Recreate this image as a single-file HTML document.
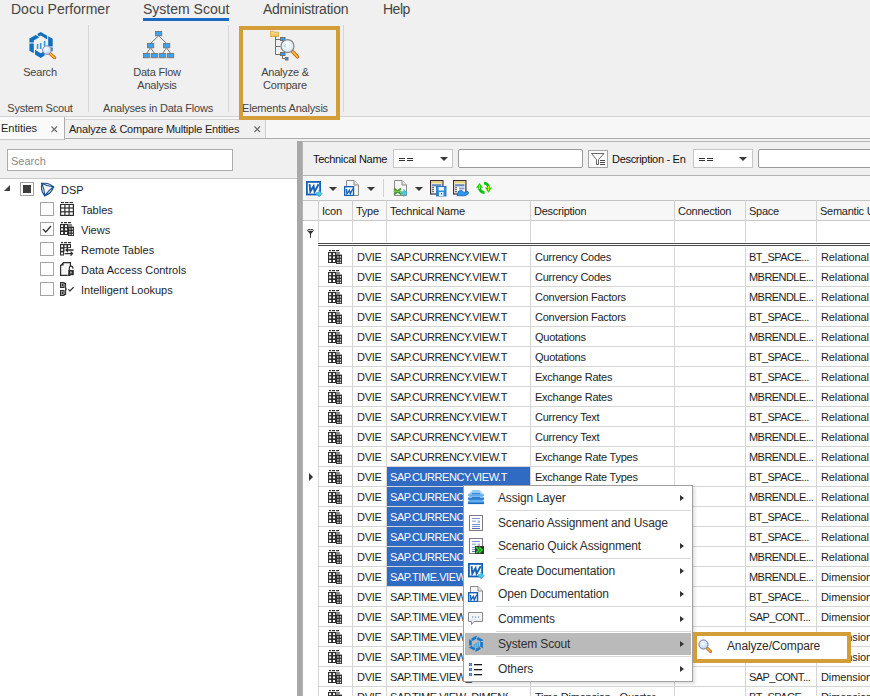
<!DOCTYPE html><html><head><meta charset="utf-8"><style>
*{margin:0;padding:0;box-sizing:border-box}
body{width:870px;height:696px;overflow:hidden;background:#f0f0f0;font-family:"Liberation Sans",sans-serif;color:#1e1e1e;position:relative}
.a{position:absolute;white-space:nowrap}
.menu{font-size:14px;color:#444;line-height:18px;margin-top:-1px}
.rb{font-size:11px;color:#444;letter-spacing:-0.2px;line-height:13px;text-align:center}
.sep{position:absolute;width:1px;background:#d6d6d6}
.cell{position:absolute;font-size:11px;line-height:19px;height:19px;white-space:nowrap;overflow:hidden;color:#1e1e1e;letter-spacing:-0.25px}
.cm{position:absolute;font-size:12px;line-height:16px;color:#2e2e2e;white-space:nowrap;letter-spacing:-0.15px}
.cms{position:absolute;height:1px;background:#d9d9d9;left:496px;width:195px}
.arr{position:absolute;width:0;height:0;border-top:3.5px solid transparent;border-bottom:3.5px solid transparent;border-left:4px solid #333;left:680px}
.cb{position:absolute;width:14px;height:14px;border:1px solid #a4a4a4;background:#fff}
.tt{position:absolute;font-size:11px;line-height:14px;color:#1e1e1e;white-space:nowrap}
.dd{position:absolute;width:0;height:0;border-left:4px solid transparent;border-right:4px solid transparent;border-top:4px solid #3a3a3a}
</style></head><body>

<div class="a menu" style="left:11px;top:1px">Docu Performer</div>
<div class="a menu" style="left:143px;top:1px">System Scout</div>
<div class="a" style="left:143px;top:18px;width:86px;height:3px;background:#1a69c2"></div>
<div class="a menu" style="left:263px;top:1px;letter-spacing:-0.25px">Administration</div>
<div class="a menu" style="left:383px;top:1px;letter-spacing:-0.5px">Help</div>
<div class="sep" style="left:88px;top:25px;height:87px"></div>
<div class="sep" style="left:228px;top:25px;height:87px"></div>
<div class="sep" style="left:343px;top:25px;height:87px"></div>
<div class="a rb" style="left:0px;width:80px;top:66px">Search</div>
<div class="a rb" style="left:0px;width:80px;top:102px">System Scout</div>
<div class="a rb" style="left:107px;width:100px;top:66px">Data Flow<br>Analysis</div>
<div class="a rb" style="left:90px;width:136px;top:102px">Analyses in Data Flows</div>
<div class="a rb" style="left:235px;width:100px;top:66px">Analyze &amp;<br>Compare</div>
<div class="a rb" style="left:235px;width:100px;top:102px">Elements Analysis</div>
<svg class="a" style="left:26px;top:28px" width="32" height="32" viewBox="0 0 32 32" ><g transform="scale(1.0)">
<g fill="#1070c0">
<path d="M3.4 10.6 L9.7 6.9 L13.3 9.3 L7.8 12.6 V14.6 H3.4z"/>
<path d="M11.2 6.1 L14.7 3.9 L21.2 7.7 V11.4 L14.7 7.6 L13.0 8.5z"/>
<path d="M22.2 8.3 L26.7 10.8 V18.6 H22.2z"/>
<path d="M25 19.6 H26.7 V23.2 H25z"/>
<path d="M3.4 15.6 H7.8 V25.2 L3.4 22.8z"/>
<path d="M9 21.8 L14.7 25.3 L18.6 23 V27.5 L14.7 29.9 L9 26.6z"/>
</g><g fill="#2f9ae0"><rect x="10.8" y="16" width="1.6" height="5"/><rect x="13.9" y="15" width="1.6" height="6"/><rect x="17.8" y="13" width="1.6" height="5.5"/></g><defs><radialGradient id="mg26" cx="0.4" cy="0.35" r="0.7"><stop offset="0" stop-color="#ffffff"/><stop offset="1" stop-color="#a9d3f2"/></radialGradient></defs>
<path d="M23.6 25.2 L28.6 29.6" stroke="#c05a10" stroke-width="3.2" stroke-linecap="round"/>
<path d="M23.6 25.2 L28.6 29.6" stroke="#ffb52e" stroke-width="1.8" stroke-linecap="round"/>
<circle cx="20.9" cy="22.1" r="4.3" fill="url(#mg26)" stroke="#8a88b8" stroke-width="1"/></g></svg>
<svg class="a" style="left:143px;top:31px" width="32" height="28" viewBox="0 0 32 28" ><g stroke="#777" stroke-width="1" fill="none"><path d="M15.6 4.7 L7.6 12.5 M15.6 4.7 L23.6 12.5 M7.6 16.7 L3.6 22.5 M7.6 16.7 L11.6 22.5 M23.6 16.7 L19.6 22.5 M23.6 16.7 L27.6 22.5"/></g><rect x="12.5" y="0.5" width="6.2" height="4.2" fill="#3ba3f0" stroke="#7a7a7a" stroke-width="1"/><rect x="4.5" y="12.5" width="6.2" height="4.2" fill="#3ba3f0" stroke="#7a7a7a" stroke-width="1"/><rect x="20.5" y="12.5" width="6.2" height="4.2" fill="#3ba3f0" stroke="#7a7a7a" stroke-width="1"/><rect x="0.5" y="22.5" width="6.2" height="4.2" fill="#3ba3f0" stroke="#7a7a7a" stroke-width="1"/><rect x="8.5" y="22.5" width="6.2" height="4.2" fill="#3ba3f0" stroke="#7a7a7a" stroke-width="1"/><rect x="16.5" y="22.5" width="6.2" height="4.2" fill="#3ba3f0" stroke="#7a7a7a" stroke-width="1"/><rect x="24.5" y="22.5" width="6.2" height="4.2" fill="#3ba3f0" stroke="#7a7a7a" stroke-width="1"/></svg>
<svg class="a" style="left:266px;top:28px" width="36" height="34" viewBox="0 0 36 34" ><defs><radialGradient id="ag" cx="0.45" cy="0.4" r="0.7"><stop offset="0" stop-color="#ffffff"/><stop offset="0.7" stop-color="#dcecf8"/><stop offset="1" stop-color="#a8cdee"/></radialGradient>
<linearGradient id="fo" x1="0" y1="0" x2="0" y2="1"><stop offset="0" stop-color="#fbe39a"/><stop offset="1" stop-color="#f0c050"/></linearGradient></defs>
<path d="M4.5 3.2 h3 l1 1 h4 v4.3 h-8z" fill="url(#fo)" stroke="#d8a040" stroke-width="0.8"/>
<g stroke="#707070" stroke-width="1" fill="none"><path d="M9.5 8.5 V26.5 H14.5 M9.5 11.5 H14.5 M9.5 18.5 H14.5 M16.5 27.5 V30.5 H19.5"/></g>
<rect x="14.5" y="9.5" width="4.5" height="3" fill="#2e9cf0" stroke="#707070" stroke-width="1"/>
<rect x="14.5" y="24.5" width="4.5" height="3" fill="#2e9cf0" stroke="#707070" stroke-width="1"/>
<rect x="19.5" y="29.5" width="2.5" height="2.5" fill="#2e9cf0" stroke="#707070" stroke-width="1"/>
<path d="M26.5 23.5 L31.5 28.8" stroke="#b84a08" stroke-width="3.4" stroke-linecap="round"/>
<path d="M26.5 23.5 L31.5 28.8" stroke="#ffc030" stroke-width="1.9" stroke-linecap="round"/>
<circle cx="21.5" cy="18.1" r="6.5" fill="url(#ag)" stroke="#858585" stroke-width="1.2"/>
<path d="M17 18 L20 15.5 V19.5z" fill="#9cc8ec" opacity="0.7"/></svg>
<div class="a" style="left:0;top:116px;width:870px;height:23px;background:#f7f7f7;border-top:1px solid #d2d2d2;border-bottom:1px solid #acacac"></div>
<div class="a" style="left:0;top:117px;width:65px;height:23px;background:#fafafa;border-right:1px solid #acacac;border-bottom:1px solid #c8c8c8"></div>
<div class="a" style="left:65px;top:119px;width:201px;height:19px;background:#f0f0f0;border-right:1px solid #cfcfcf;border-top:1px solid #d6d6d6"></div>
<div class="a" style="left:1px;top:121px;font-size:11px;line-height:14px;color:#1e1e1e">Entities</div>
<svg class="a" style="left:51px;top:126px" width="7" height="7" viewBox="0 0 7 7" ><path d="M0.5 0.5 L6 6 M6 0.5 L0.5 6" stroke="#6a6a6a" stroke-width="1.1"/></svg>
<div class="a" style="left:69px;top:122px;font-size:11px;line-height:14px;color:#1e1e1e;letter-spacing:-0.22px">Analyze &amp; Compare Multiple Entities</div>
<svg class="a" style="left:254px;top:126px" width="7" height="7" viewBox="0 0 7 7" ><path d="M0.5 0.5 L6 6 M6 0.5 L0.5 6" stroke="#6a6a6a" stroke-width="1.1"/></svg>
<div class="a" style="left:239px;top:26px;width:101px;height:94px;border:4px solid #d39e38"></div>
<div class="a" style="left:0;top:140px;width:297px;height:39px;background:#f0f0f0;border-bottom:1px solid #c9c9c9"></div>
<div class="a" style="left:7px;top:149px;width:226px;height:22px;background:#fff;border:1px solid #acacac"></div>
<div class="a" style="left:11px;top:154px;font-size:11px;line-height:14px;color:#8a8a8a">Search</div>
<div class="a" style="left:0;top:179px;width:297px;height:517px;background:#fff"></div>
<div class="a" style="left:4px;top:185px;width:0;height:0;border-left:6px solid transparent;border-bottom:6px solid #404040"></div>
<div class="cb" style="left:20px;top:182px"></div><div class="a" style="left:23px;top:185px;width:8px;height:8px;background:#3c3c3c"></div>
<svg class="a" style="left:40px;top:182px" width="15" height="15" viewBox="0 0 15 15" ><path d="M2.0 1.6 L13.4 5.0 L4.8 13.6z" fill="#f0f3f8"/>
<g fill="none" stroke="#1a4f8a" stroke-width="1.15" stroke-linejoin="round"><path d="M2.00 1.60 Q8.62 0.03 13.40 5.00 Q7.43 4.26 2.00 1.60z"/><path d="M13.40 5.00 Q11.40 11.80 4.80 13.60 Q8.42 8.56 13.40 5.00z"/><path d="M4.80 13.60 Q0.11 8.46 2.00 1.60 Q4.37 7.35 4.80 13.60z"/></g>
<g fill="#1a4f8a"><circle cx="2.0" cy="1.6" r="1.0"/><circle cx="13.4" cy="5.0" r="1.0"/><circle cx="4.8" cy="13.6" r="1.0"/></g></svg>
<div class="tt" style="left:61px;top:183px">DSP</div>
<div class="cb" style="left:40px;top:202px"></div>
<svg class="a" style="left:60px;top:202px" width="14" height="14" viewBox="0 0 14 14" ><g fill="#2e2e2e"><rect x="1" y="0" width="3" height="1.1"/><rect x="5" y="0" width="3.5" height="1.1"/><rect x="9.5" y="0" width="3.5" height="1.1"/>
<rect x="0" y="2" width="14" height="12"/></g><g fill="#fff">
<rect x="1.2" y="3" width="3.1" height="2.4"/><rect x="5.5" y="3" width="3" height="2.4"/><rect x="9.7" y="3" width="3.1" height="2.4"/>
<rect x="1.2" y="6.6" width="3.1" height="2.6"/><rect x="5.5" y="6.6" width="3" height="2.6"/><rect x="9.7" y="6.6" width="3.1" height="2.6"/>
<rect x="1.2" y="10.4" width="3.1" height="2.4"/><rect x="5.5" y="10.4" width="3" height="2.4"/><rect x="9.7" y="10.4" width="3.1" height="2.4"/></g></svg>
<div class="tt" style="left:81px;top:203px">Tables</div>
<div class="cb" style="left:40px;top:222px"></div>
<svg class="a" style="left:42px;top:225px" width="10" height="8" viewBox="0 0 10 8" ><path d="M1 4 L3.8 7 L9 1" fill="none" stroke="#333" stroke-width="1.3"/></svg>
<svg class="a" style="left:60px;top:222px" width="15" height="14" viewBox="0 0 15 14" ><g fill="#2e2e2e"><rect x="1" y="0" width="2" height="1.2"/><rect x="4" y="0" width="3" height="1.2"/><rect x="8" y="0" width="3" height="1.2"/>
<rect x="0" y="2" width="8.2" height="11"/><rect x="8" y="2" width="4" height="2.6" fill="#8a8a8a"/><rect x="8" y="4.6" width="6" height="9.4"/></g>
<g fill="#fff"><rect x="1.1" y="3.1" width="2" height="2"/><rect x="5" y="3.1" width="2" height="2"/><rect x="1.1" y="6.4" width="2" height="2"/><rect x="5" y="6.4" width="2" height="2"/><rect x="1.1" y="10" width="2" height="2"/><rect x="5" y="10" width="2" height="2"/>
<rect x="9.3" y="6.3" width="1.3" height="1.3"/><rect x="11.8" y="6.3" width="1.3" height="1.3"/><rect x="9.3" y="9.2" width="1.3" height="1.3"/><rect x="11.8" y="9.2" width="1.3" height="1.3"/><rect x="9.3" y="11.8" width="1.3" height="1.3"/><rect x="11.8" y="11.8" width="1.3" height="1.3"/></g></svg>
<div class="tt" style="left:81px;top:223px">Views</div>
<div class="cb" style="left:40px;top:242px"></div>
<svg class="a" style="left:60px;top:242px" width="14" height="14" viewBox="0 0 14 14" ><g fill="#2e2e2e"><rect x="1" y="0" width="2" height="1.2"/><rect x="4" y="0" width="3" height="1.2"/><rect x="8" y="0" width="3" height="1.2"/>
<rect x="0" y="2" width="11" height="11.5"/></g><g fill="#fff">
<rect x="1.1" y="3.2" width="2" height="2"/><rect x="4.5" y="3.2" width="2" height="2"/><rect x="8" y="3.2" width="2" height="2"/>
<rect x="1.1" y="6.8" width="2" height="2"/><rect x="1.1" y="10.4" width="2" height="2"/></g>
<path d="M4 6 H14 V14 H4z" fill="#fff"/>
<g stroke="#2e2e2e" stroke-width="1.3" fill="none"><path d="M13.5 8 H6 M8 6 L6 8 L8 10"/><path d="M4.5 11.6 H12.5 M10.5 9.6 L12.5 11.6 L10.5 13.6"/></g>
<rect x="3.5" y="6" width="1" height="4" fill="#2e2e2e"/></svg>
<div class="tt" style="left:81px;top:243px">Remote Tables</div>
<div class="cb" style="left:40px;top:262px"></div>
<svg class="a" style="left:60px;top:262px" width="14" height="14" viewBox="0 0 14 14" ><path d="M3.6 0.6 H10.4 V13.4 H0.6 V3.6z" fill="#f4f4f4" stroke="#2e2e2e" stroke-width="1.2"/>
<path d="M0.6 3.6 L3.6 0.6 V3.6z" fill="#2e2e2e"/>
<rect x="7.6" y="4" width="6.4" height="10" fill="#fff"/>
<path d="M9.3 8 V6 A1.8 1.8 0 0 1 12.9 6 V6.8" fill="none" stroke="#2e2e2e" stroke-width="1.2"/>
<rect x="8.2" y="8" width="5.6" height="5.2" fill="#2e2e2e"/><rect x="10.5" y="9.5" width="1" height="2" fill="#fff"/>
<path d="M7.6 13.4 H10.4" stroke="#2e2e2e" stroke-width="1.2"/></svg>
<div class="tt" style="left:81px;top:263px">Data Access Controls</div>
<div class="cb" style="left:40px;top:282px"></div>
<svg class="a" style="left:60px;top:282px" width="14" height="14" viewBox="0 0 14 14" ><rect x="0.6" y="0.6" width="3.4" height="4.8" fill="#fff" stroke="#2e2e2e" stroke-width="1.2"/><rect x="1.6" y="1.6" width="1.4" height="2.8" fill="#2e2e2e"/>
<rect x="0.6" y="8.6" width="3.4" height="4.8" fill="#fff" stroke="#2e2e2e" stroke-width="1.2"/><rect x="1.6" y="9.6" width="1.4" height="2.8" fill="#2e2e2e"/>
<path d="M4 1.5 H5.6 V12.5 H4 M5.6 7 H7" fill="none" stroke="#2e2e2e" stroke-width="1.1"/>
<path d="M8.3 7.3 L10 9 L13.6 5.2" fill="none" stroke="#2e2e2e" stroke-width="1.2"/></svg>
<div class="tt" style="left:81px;top:283px">Intelligent Lookups</div>
<div class="a" style="left:297px;top:141px;width:5px;height:555px;background:#a8a8a8"></div>
<div class="a" style="left:302px;top:141px;width:1px;height:555px;background:#b4b4b4"></div>
<div class="a" style="left:303px;top:141px;width:567px;height:35px;background:#f0f0f0;border-top:1px solid #b4b4b4;border-bottom:1px solid #b4b4b4"></div>
<div class="a" style="left:313px;top:152px;font-size:11px;line-height:14px;letter-spacing:-0.3px;color:#111">Technical Name</div>
<div class="a" style="left:393px;top:149px;width:60px;height:19px;background:#fff;border:1px solid #c6c6c6"></div>
<div class="a" style="left:399px;top:158px;width:6px;height:1px;background:#333"></div><div class="a" style="left:399px;top:160px;width:6px;height:1px;background:#333"></div><div class="a" style="left:407px;top:158px;width:6px;height:1px;background:#333"></div><div class="a" style="left:407px;top:160px;width:6px;height:1px;background:#333"></div>
<div class="dd" style="left:440px;top:157px"></div>
<div class="a" style="left:458px;top:149px;width:125px;height:19px;background:#fff;border:1px solid #9a9a9a;border-radius:2px"></div>
<svg class="a" style="left:588px;top:150px" width="20" height="18" viewBox="0 0 20 18" ><rect x="0.5" y="0.5" width="19" height="17" fill="#fbfbfb" stroke="#a6a6a6" stroke-width="1"/>
<path d="M3.5 3.5 H16 L10.5 9.5 V14.5 H8.5 V9.5z" fill="#fff" stroke="#555" stroke-width="0.9" stroke-linejoin="round"/>
<g fill="#333"><rect x="12" y="10" width="5" height="0.9"/><rect x="12" y="12" width="5" height="0.9"/><rect x="12" y="14" width="5" height="0.9"/></g></svg>
<div class="a" style="left:612px;top:152px;font-size:11px;line-height:14px;letter-spacing:-0.3px;color:#111">Description - En</div>
<div class="a" style="left:693px;top:149px;width:60px;height:19px;background:#fff;border:1px solid #c6c6c6"></div>
<div class="a" style="left:699px;top:158px;width:6px;height:1px;background:#333"></div><div class="a" style="left:699px;top:160px;width:6px;height:1px;background:#333"></div><div class="a" style="left:707px;top:158px;width:6px;height:1px;background:#333"></div><div class="a" style="left:707px;top:160px;width:6px;height:1px;background:#333"></div>
<div class="dd" style="left:739px;top:157px"></div>
<div class="a" style="left:758px;top:149px;width:130px;height:19px;background:#fff;border:1px solid #9a9a9a;border-radius:2px"></div>
<div class="a" style="left:303px;top:176px;width:567px;height:24px;background:#f7f7f7"></div>
<svg class="a" style="left:306px;top:181px" width="17" height="17" viewBox="0 0 17 17" ><rect x="0.9" y="0.9" width="13.2" height="12.6" fill="#fff" stroke="#1560b8" stroke-width="1.8"/>
<path d="M3.6 3.2 L4.3 10.6 L7.6 5.2 L8.6 10.6 L12.6 3.2" fill="none" stroke="#1560b8" stroke-width="1.9" stroke-linejoin="miter"/>
<path d="M10.5 11.5 h2.3 v-2.2 l3.3 3.4 l-3.3 3.4 v-2.2 h-2.3z" fill="#48cce8" stroke="#2a9cc0" stroke-width="0.6"/></svg>
<div class="dd" style="left:329px;top:187px"></div>
<svg class="a" style="left:344px;top:180px" width="16" height="16" viewBox="0 0 16 16" ><path d="M2.5 0.5 H10 L14.5 5 V15.5 H2.5z" fill="#f6f6f6" stroke="#8a8a8a" stroke-width="1"/>
<path d="M10 0.5 V5 H14.5" fill="#e4e4e4" stroke="#8a8a8a" stroke-width="1"/>
<rect x="0.7" y="6.7" width="8.8" height="8.8" fill="#fff" stroke="#1560b8" stroke-width="1.4"/>
<path d="M2.4 8.8 L3 13.8 L5.4 10.4 L6.3 13.8 L8.8 8.8" fill="none" stroke="#1560b8" stroke-width="1.4"/></svg>
<div class="dd" style="left:367px;top:187px"></div>
<div class="a" style="left:383px;top:179px;width:1px;height:18px;background:#d0d0d0"></div>
<svg class="a" style="left:393px;top:180px" width="16" height="17" viewBox="0 0 16 17" ><path d="M1.5 0.5 H9 L13.5 5 V15.5 H1.5z" fill="#f6f6f6" stroke="#8a8a8a" stroke-width="1"/>
<path d="M9 0.5 V5 H13.5" fill="#e4e4e4" stroke="#8a8a8a" stroke-width="1"/>
<path d="M1 8.5 L8.5 14.5 M8 8.5 L1 14.5" stroke="#3c9a2a" stroke-width="1.8"/>
<rect x="0.5" y="10.8" width="8" height="1.2" fill="#7ac850"/>
<path d="M8.5 11.8 h2.3 v-2.2 l3.3 3.4 l-3.3 3.4 v-2.2 h-2.3z" fill="#48cce8" stroke="#2a9cc0" stroke-width="0.6"/></svg>
<div class="dd" style="left:415px;top:187px"></div>
<svg class="a" style="left:430px;top:180px" width="17" height="17" viewBox="0 0 17 17" ><rect x="0.6" y="0.6" width="12.3" height="13.4" fill="#fff" stroke="#3a2a3a" stroke-width="1.2"/>
<rect x="1.2" y="1.2" width="11.1" height="2.3" fill="#e6d27a"/>
<rect x="2" y="4.2" width="9.5" height="2.2" fill="#6a88b8"/>
<g fill="#333"><rect x="2" y="7.3" width="2" height="0.9"/><rect x="2" y="9.3" width="2" height="0.9"/><rect x="2" y="11.3" width="2" height="0.9"/></g>
<rect x="6.5" y="6.5" width="9.5" height="9.5" fill="#2f8fdc" stroke="#1f6fb8" stroke-width="0.8"/>
<rect x="8.5" y="7" width="5.5" height="3.5" fill="#e8f4ff"/><rect x="9" y="12" width="4.5" height="4" fill="#dff0ff"/><rect x="11" y="13" width="1" height="1.5" fill="#555"/></svg>
<svg class="a" style="left:453px;top:180px" width="17" height="17" viewBox="0 0 17 17" ><rect x="0.6" y="0.6" width="12.3" height="13.4" fill="#fff" stroke="#3a2a3a" stroke-width="1.2"/>
<rect x="1.2" y="1.2" width="11.1" height="2.3" fill="#e6d27a"/>
<rect x="2" y="4.2" width="9.5" height="2.2" fill="#6a88b8"/>
<g fill="#333"><rect x="2" y="7.3" width="2" height="0.9"/><rect x="2" y="9.3" width="2" height="0.9"/><rect x="2" y="11.3" width="2" height="0.9"/></g>
<rect x="6" y="7.5" width="5.5" height="2" fill="#8a9ad0"/>
<path d="M4 15.6 L5.5 11 L9 10.5 L11 12.5 L14 11 L15.8 12.5 C15 15 12 16 9 15.8z" fill="#2a9ae8" stroke="#1a5ab0" stroke-width="0.8"/></svg>
<svg class="a" style="left:472px;top:178px" width="21" height="17" viewBox="0 0 21 17" ><defs><linearGradient id="rg" x1="0" y1="0" x2="1" y2="1"><stop offset="0" stop-color="#b8f000"/><stop offset="1" stop-color="#00c000"/></linearGradient></defs>
<g fill="none" stroke="#00c400" stroke-width="2.8"><path d="M7.5 9.3 A5 5 0 0 0 12.5 14.6"/><path d="M12 5.2 A4.6 4.6 0 0 1 16.6 9.8"/></g>
<path d="M4 9.7 L7.5 5 L11 9.7z" fill="#20d000"/><path d="M13 9.6 L20 9.6 L16.5 14.7z" fill="#20d000"/>
<path d="M7.5 7 V11" stroke="#c8f000" stroke-width="1"/><path d="M16.5 8 V12.5" stroke="#c8f000" stroke-width="1"/></svg>
<div class="a" style="left:303px;top:200px;width:567px;height:496px;background:#fff"></div>
<div class="a" style="left:303px;top:200px;width:567px;height:21px;background:#f7f7f7;border-top:1px solid #c4c4c4;border-bottom:1px solid #c8c8c8"></div>
<div class="a" style="left:318px;top:200px;width:1px;height:21px;background:#d0d0d0"></div>
<div class="cell" style="left:322px;top:202px;line-height:19px">Icon</div>
<div class="a" style="left:352px;top:200px;width:1px;height:21px;background:#d0d0d0"></div>
<div class="cell" style="left:356px;top:202px;line-height:19px">Type</div>
<div class="a" style="left:386px;top:200px;width:1px;height:21px;background:#d0d0d0"></div>
<div class="cell" style="left:390px;top:202px;line-height:19px">Technical Name</div>
<div class="a" style="left:530px;top:200px;width:1px;height:21px;background:#d0d0d0"></div>
<div class="cell" style="left:534px;top:202px;line-height:19px">Description</div>
<div class="a" style="left:674px;top:200px;width:1px;height:21px;background:#d0d0d0"></div>
<div class="cell" style="left:678px;top:202px;line-height:19px">Connection</div>
<div class="a" style="left:745px;top:200px;width:1px;height:21px;background:#d0d0d0"></div>
<div class="cell" style="left:749px;top:202px;line-height:19px">Space</div>
<div class="a" style="left:816px;top:200px;width:1px;height:21px;background:#d0d0d0"></div>
<div class="cell" style="left:820px;top:202px;line-height:19px">Semantic U</div>
<svg class="a" style="left:307px;top:229px" width="7" height="9" viewBox="0 0 7 9" ><ellipse cx="3.5" cy="1.5" rx="3.2" ry="1.2" fill="#fff" stroke="#333" stroke-width="1"/>
<path d="M0.5 1.8 L3 5 V8.7 H4 V5 L6.5 1.8z" fill="#333"/></svg>
<div class="a" style="left:318px;top:221px;width:1px;height:21px;background:#d5d5d5"></div>
<div class="a" style="left:352px;top:221px;width:1px;height:21px;background:#d5d5d5"></div>
<div class="a" style="left:386px;top:221px;width:1px;height:21px;background:#d5d5d5"></div>
<div class="a" style="left:530px;top:221px;width:1px;height:21px;background:#d5d5d5"></div>
<div class="a" style="left:674px;top:221px;width:1px;height:21px;background:#d5d5d5"></div>
<div class="a" style="left:745px;top:221px;width:1px;height:21px;background:#d5d5d5"></div>
<div class="a" style="left:816px;top:221px;width:1px;height:21px;background:#d5d5d5"></div>
<div class="a" style="left:318px;top:243px;width:552px;height:1px;background:#4a4a4a"></div>
<div class="a" style="left:318px;top:245px;width:552px;height:1px;background:#4a4a4a"></div>
<div class="a" style="left:318px;top:266px;width:552px;height:1px;background:#d5d5d5"></div>
<div class="a" style="left:318px;top:247px;width:1px;height:20px;background:#d5d5d5"></div>
<div class="a" style="left:352px;top:247px;width:1px;height:20px;background:#d5d5d5"></div>
<div class="a" style="left:386px;top:247px;width:1px;height:20px;background:#d5d5d5"></div>
<div class="a" style="left:530px;top:247px;width:1px;height:20px;background:#d5d5d5"></div>
<div class="a" style="left:674px;top:247px;width:1px;height:20px;background:#d5d5d5"></div>
<div class="a" style="left:745px;top:247px;width:1px;height:20px;background:#d5d5d5"></div>
<div class="a" style="left:816px;top:247px;width:1px;height:20px;background:#d5d5d5"></div>
<svg class="a" style="left:328px;top:250px" width="15" height="14" viewBox="0 0 15 14" ><g fill="#2e2e2e"><rect x="1" y="0" width="2" height="1.2"/><rect x="4" y="0" width="3" height="1.2"/><rect x="8" y="0" width="3" height="1.2"/>
<rect x="0" y="2" width="8.2" height="11"/><rect x="8" y="2" width="4" height="2.6" fill="#8a8a8a"/><rect x="8" y="4.6" width="6" height="9.4"/></g>
<g fill="#fff"><rect x="1.1" y="3.1" width="2" height="2"/><rect x="5" y="3.1" width="2" height="2"/><rect x="1.1" y="6.4" width="2" height="2"/><rect x="5" y="6.4" width="2" height="2"/><rect x="1.1" y="10" width="2" height="2"/><rect x="5" y="10" width="2" height="2"/>
<rect x="9.3" y="6.3" width="1.3" height="1.3"/><rect x="11.8" y="6.3" width="1.3" height="1.3"/><rect x="9.3" y="9.2" width="1.3" height="1.3"/><rect x="11.8" y="9.2" width="1.3" height="1.3"/><rect x="9.3" y="11.8" width="1.3" height="1.3"/><rect x="11.8" y="11.8" width="1.3" height="1.3"/></g></svg>
<div class="cell" style="left:357px;top:247.5px;width:28px">DVIE</div>
<div class="cell" style="left:390px;top:247.5px;width:118px;letter-spacing:-0.42px">SAP.CURRENCY.VIEW.T</div>
<div class="cell" style="left:535px;top:247.5px;width:138px">Currency Codes</div>
<div class="cell" style="left:749px;top:247.5px;width:66px;letter-spacing:-0.55px">BT_SPACE...</div>
<div class="cell" style="left:821px;top:247.5px;width:60px;letter-spacing:-0.1px">Relational</div>
<div class="a" style="left:318px;top:286px;width:552px;height:1px;background:#d5d5d5"></div>
<div class="a" style="left:318px;top:267px;width:1px;height:20px;background:#d5d5d5"></div>
<div class="a" style="left:352px;top:267px;width:1px;height:20px;background:#d5d5d5"></div>
<div class="a" style="left:386px;top:267px;width:1px;height:20px;background:#d5d5d5"></div>
<div class="a" style="left:530px;top:267px;width:1px;height:20px;background:#d5d5d5"></div>
<div class="a" style="left:674px;top:267px;width:1px;height:20px;background:#d5d5d5"></div>
<div class="a" style="left:745px;top:267px;width:1px;height:20px;background:#d5d5d5"></div>
<div class="a" style="left:816px;top:267px;width:1px;height:20px;background:#d5d5d5"></div>
<svg class="a" style="left:328px;top:270px" width="15" height="14" viewBox="0 0 15 14" ><g fill="#2e2e2e"><rect x="1" y="0" width="2" height="1.2"/><rect x="4" y="0" width="3" height="1.2"/><rect x="8" y="0" width="3" height="1.2"/>
<rect x="0" y="2" width="8.2" height="11"/><rect x="8" y="2" width="4" height="2.6" fill="#8a8a8a"/><rect x="8" y="4.6" width="6" height="9.4"/></g>
<g fill="#fff"><rect x="1.1" y="3.1" width="2" height="2"/><rect x="5" y="3.1" width="2" height="2"/><rect x="1.1" y="6.4" width="2" height="2"/><rect x="5" y="6.4" width="2" height="2"/><rect x="1.1" y="10" width="2" height="2"/><rect x="5" y="10" width="2" height="2"/>
<rect x="9.3" y="6.3" width="1.3" height="1.3"/><rect x="11.8" y="6.3" width="1.3" height="1.3"/><rect x="9.3" y="9.2" width="1.3" height="1.3"/><rect x="11.8" y="9.2" width="1.3" height="1.3"/><rect x="9.3" y="11.8" width="1.3" height="1.3"/><rect x="11.8" y="11.8" width="1.3" height="1.3"/></g></svg>
<div class="cell" style="left:357px;top:267.5px;width:28px">DVIE</div>
<div class="cell" style="left:390px;top:267.5px;width:118px;letter-spacing:-0.42px">SAP.CURRENCY.VIEW.T</div>
<div class="cell" style="left:535px;top:267.5px;width:138px">Currency Codes</div>
<div class="cell" style="left:749px;top:267.5px;width:66px;letter-spacing:-0.55px">MBRENDLE...</div>
<div class="cell" style="left:821px;top:267.5px;width:60px;letter-spacing:-0.1px">Relational</div>
<div class="a" style="left:318px;top:306px;width:552px;height:1px;background:#d5d5d5"></div>
<div class="a" style="left:318px;top:287px;width:1px;height:20px;background:#d5d5d5"></div>
<div class="a" style="left:352px;top:287px;width:1px;height:20px;background:#d5d5d5"></div>
<div class="a" style="left:386px;top:287px;width:1px;height:20px;background:#d5d5d5"></div>
<div class="a" style="left:530px;top:287px;width:1px;height:20px;background:#d5d5d5"></div>
<div class="a" style="left:674px;top:287px;width:1px;height:20px;background:#d5d5d5"></div>
<div class="a" style="left:745px;top:287px;width:1px;height:20px;background:#d5d5d5"></div>
<div class="a" style="left:816px;top:287px;width:1px;height:20px;background:#d5d5d5"></div>
<svg class="a" style="left:328px;top:290px" width="15" height="14" viewBox="0 0 15 14" ><g fill="#2e2e2e"><rect x="1" y="0" width="2" height="1.2"/><rect x="4" y="0" width="3" height="1.2"/><rect x="8" y="0" width="3" height="1.2"/>
<rect x="0" y="2" width="8.2" height="11"/><rect x="8" y="2" width="4" height="2.6" fill="#8a8a8a"/><rect x="8" y="4.6" width="6" height="9.4"/></g>
<g fill="#fff"><rect x="1.1" y="3.1" width="2" height="2"/><rect x="5" y="3.1" width="2" height="2"/><rect x="1.1" y="6.4" width="2" height="2"/><rect x="5" y="6.4" width="2" height="2"/><rect x="1.1" y="10" width="2" height="2"/><rect x="5" y="10" width="2" height="2"/>
<rect x="9.3" y="6.3" width="1.3" height="1.3"/><rect x="11.8" y="6.3" width="1.3" height="1.3"/><rect x="9.3" y="9.2" width="1.3" height="1.3"/><rect x="11.8" y="9.2" width="1.3" height="1.3"/><rect x="9.3" y="11.8" width="1.3" height="1.3"/><rect x="11.8" y="11.8" width="1.3" height="1.3"/></g></svg>
<div class="cell" style="left:357px;top:287.5px;width:28px">DVIE</div>
<div class="cell" style="left:390px;top:287.5px;width:118px;letter-spacing:-0.42px">SAP.CURRENCY.VIEW.T</div>
<div class="cell" style="left:535px;top:287.5px;width:138px">Conversion Factors</div>
<div class="cell" style="left:749px;top:287.5px;width:66px;letter-spacing:-0.55px">MBRENDLE...</div>
<div class="cell" style="left:821px;top:287.5px;width:60px;letter-spacing:-0.1px">Relational</div>
<div class="a" style="left:318px;top:326px;width:552px;height:1px;background:#d5d5d5"></div>
<div class="a" style="left:318px;top:307px;width:1px;height:20px;background:#d5d5d5"></div>
<div class="a" style="left:352px;top:307px;width:1px;height:20px;background:#d5d5d5"></div>
<div class="a" style="left:386px;top:307px;width:1px;height:20px;background:#d5d5d5"></div>
<div class="a" style="left:530px;top:307px;width:1px;height:20px;background:#d5d5d5"></div>
<div class="a" style="left:674px;top:307px;width:1px;height:20px;background:#d5d5d5"></div>
<div class="a" style="left:745px;top:307px;width:1px;height:20px;background:#d5d5d5"></div>
<div class="a" style="left:816px;top:307px;width:1px;height:20px;background:#d5d5d5"></div>
<svg class="a" style="left:328px;top:310px" width="15" height="14" viewBox="0 0 15 14" ><g fill="#2e2e2e"><rect x="1" y="0" width="2" height="1.2"/><rect x="4" y="0" width="3" height="1.2"/><rect x="8" y="0" width="3" height="1.2"/>
<rect x="0" y="2" width="8.2" height="11"/><rect x="8" y="2" width="4" height="2.6" fill="#8a8a8a"/><rect x="8" y="4.6" width="6" height="9.4"/></g>
<g fill="#fff"><rect x="1.1" y="3.1" width="2" height="2"/><rect x="5" y="3.1" width="2" height="2"/><rect x="1.1" y="6.4" width="2" height="2"/><rect x="5" y="6.4" width="2" height="2"/><rect x="1.1" y="10" width="2" height="2"/><rect x="5" y="10" width="2" height="2"/>
<rect x="9.3" y="6.3" width="1.3" height="1.3"/><rect x="11.8" y="6.3" width="1.3" height="1.3"/><rect x="9.3" y="9.2" width="1.3" height="1.3"/><rect x="11.8" y="9.2" width="1.3" height="1.3"/><rect x="9.3" y="11.8" width="1.3" height="1.3"/><rect x="11.8" y="11.8" width="1.3" height="1.3"/></g></svg>
<div class="cell" style="left:357px;top:307.5px;width:28px">DVIE</div>
<div class="cell" style="left:390px;top:307.5px;width:118px;letter-spacing:-0.42px">SAP.CURRENCY.VIEW.T</div>
<div class="cell" style="left:535px;top:307.5px;width:138px">Conversion Factors</div>
<div class="cell" style="left:749px;top:307.5px;width:66px;letter-spacing:-0.55px">BT_SPACE...</div>
<div class="cell" style="left:821px;top:307.5px;width:60px;letter-spacing:-0.1px">Relational</div>
<div class="a" style="left:318px;top:346px;width:552px;height:1px;background:#d5d5d5"></div>
<div class="a" style="left:318px;top:327px;width:1px;height:20px;background:#d5d5d5"></div>
<div class="a" style="left:352px;top:327px;width:1px;height:20px;background:#d5d5d5"></div>
<div class="a" style="left:386px;top:327px;width:1px;height:20px;background:#d5d5d5"></div>
<div class="a" style="left:530px;top:327px;width:1px;height:20px;background:#d5d5d5"></div>
<div class="a" style="left:674px;top:327px;width:1px;height:20px;background:#d5d5d5"></div>
<div class="a" style="left:745px;top:327px;width:1px;height:20px;background:#d5d5d5"></div>
<div class="a" style="left:816px;top:327px;width:1px;height:20px;background:#d5d5d5"></div>
<svg class="a" style="left:328px;top:330px" width="15" height="14" viewBox="0 0 15 14" ><g fill="#2e2e2e"><rect x="1" y="0" width="2" height="1.2"/><rect x="4" y="0" width="3" height="1.2"/><rect x="8" y="0" width="3" height="1.2"/>
<rect x="0" y="2" width="8.2" height="11"/><rect x="8" y="2" width="4" height="2.6" fill="#8a8a8a"/><rect x="8" y="4.6" width="6" height="9.4"/></g>
<g fill="#fff"><rect x="1.1" y="3.1" width="2" height="2"/><rect x="5" y="3.1" width="2" height="2"/><rect x="1.1" y="6.4" width="2" height="2"/><rect x="5" y="6.4" width="2" height="2"/><rect x="1.1" y="10" width="2" height="2"/><rect x="5" y="10" width="2" height="2"/>
<rect x="9.3" y="6.3" width="1.3" height="1.3"/><rect x="11.8" y="6.3" width="1.3" height="1.3"/><rect x="9.3" y="9.2" width="1.3" height="1.3"/><rect x="11.8" y="9.2" width="1.3" height="1.3"/><rect x="9.3" y="11.8" width="1.3" height="1.3"/><rect x="11.8" y="11.8" width="1.3" height="1.3"/></g></svg>
<div class="cell" style="left:357px;top:327.5px;width:28px">DVIE</div>
<div class="cell" style="left:390px;top:327.5px;width:118px;letter-spacing:-0.42px">SAP.CURRENCY.VIEW.T</div>
<div class="cell" style="left:535px;top:327.5px;width:138px">Quotations</div>
<div class="cell" style="left:749px;top:327.5px;width:66px;letter-spacing:-0.55px">MBRENDLE...</div>
<div class="cell" style="left:821px;top:327.5px;width:60px;letter-spacing:-0.1px">Relational</div>
<div class="a" style="left:318px;top:366px;width:552px;height:1px;background:#d5d5d5"></div>
<div class="a" style="left:318px;top:347px;width:1px;height:20px;background:#d5d5d5"></div>
<div class="a" style="left:352px;top:347px;width:1px;height:20px;background:#d5d5d5"></div>
<div class="a" style="left:386px;top:347px;width:1px;height:20px;background:#d5d5d5"></div>
<div class="a" style="left:530px;top:347px;width:1px;height:20px;background:#d5d5d5"></div>
<div class="a" style="left:674px;top:347px;width:1px;height:20px;background:#d5d5d5"></div>
<div class="a" style="left:745px;top:347px;width:1px;height:20px;background:#d5d5d5"></div>
<div class="a" style="left:816px;top:347px;width:1px;height:20px;background:#d5d5d5"></div>
<svg class="a" style="left:328px;top:350px" width="15" height="14" viewBox="0 0 15 14" ><g fill="#2e2e2e"><rect x="1" y="0" width="2" height="1.2"/><rect x="4" y="0" width="3" height="1.2"/><rect x="8" y="0" width="3" height="1.2"/>
<rect x="0" y="2" width="8.2" height="11"/><rect x="8" y="2" width="4" height="2.6" fill="#8a8a8a"/><rect x="8" y="4.6" width="6" height="9.4"/></g>
<g fill="#fff"><rect x="1.1" y="3.1" width="2" height="2"/><rect x="5" y="3.1" width="2" height="2"/><rect x="1.1" y="6.4" width="2" height="2"/><rect x="5" y="6.4" width="2" height="2"/><rect x="1.1" y="10" width="2" height="2"/><rect x="5" y="10" width="2" height="2"/>
<rect x="9.3" y="6.3" width="1.3" height="1.3"/><rect x="11.8" y="6.3" width="1.3" height="1.3"/><rect x="9.3" y="9.2" width="1.3" height="1.3"/><rect x="11.8" y="9.2" width="1.3" height="1.3"/><rect x="9.3" y="11.8" width="1.3" height="1.3"/><rect x="11.8" y="11.8" width="1.3" height="1.3"/></g></svg>
<div class="cell" style="left:357px;top:347.5px;width:28px">DVIE</div>
<div class="cell" style="left:390px;top:347.5px;width:118px;letter-spacing:-0.42px">SAP.CURRENCY.VIEW.T</div>
<div class="cell" style="left:535px;top:347.5px;width:138px">Quotations</div>
<div class="cell" style="left:749px;top:347.5px;width:66px;letter-spacing:-0.55px">BT_SPACE...</div>
<div class="cell" style="left:821px;top:347.5px;width:60px;letter-spacing:-0.1px">Relational</div>
<div class="a" style="left:318px;top:386px;width:552px;height:1px;background:#d5d5d5"></div>
<div class="a" style="left:318px;top:367px;width:1px;height:20px;background:#d5d5d5"></div>
<div class="a" style="left:352px;top:367px;width:1px;height:20px;background:#d5d5d5"></div>
<div class="a" style="left:386px;top:367px;width:1px;height:20px;background:#d5d5d5"></div>
<div class="a" style="left:530px;top:367px;width:1px;height:20px;background:#d5d5d5"></div>
<div class="a" style="left:674px;top:367px;width:1px;height:20px;background:#d5d5d5"></div>
<div class="a" style="left:745px;top:367px;width:1px;height:20px;background:#d5d5d5"></div>
<div class="a" style="left:816px;top:367px;width:1px;height:20px;background:#d5d5d5"></div>
<svg class="a" style="left:328px;top:370px" width="15" height="14" viewBox="0 0 15 14" ><g fill="#2e2e2e"><rect x="1" y="0" width="2" height="1.2"/><rect x="4" y="0" width="3" height="1.2"/><rect x="8" y="0" width="3" height="1.2"/>
<rect x="0" y="2" width="8.2" height="11"/><rect x="8" y="2" width="4" height="2.6" fill="#8a8a8a"/><rect x="8" y="4.6" width="6" height="9.4"/></g>
<g fill="#fff"><rect x="1.1" y="3.1" width="2" height="2"/><rect x="5" y="3.1" width="2" height="2"/><rect x="1.1" y="6.4" width="2" height="2"/><rect x="5" y="6.4" width="2" height="2"/><rect x="1.1" y="10" width="2" height="2"/><rect x="5" y="10" width="2" height="2"/>
<rect x="9.3" y="6.3" width="1.3" height="1.3"/><rect x="11.8" y="6.3" width="1.3" height="1.3"/><rect x="9.3" y="9.2" width="1.3" height="1.3"/><rect x="11.8" y="9.2" width="1.3" height="1.3"/><rect x="9.3" y="11.8" width="1.3" height="1.3"/><rect x="11.8" y="11.8" width="1.3" height="1.3"/></g></svg>
<div class="cell" style="left:357px;top:367.5px;width:28px">DVIE</div>
<div class="cell" style="left:390px;top:367.5px;width:118px;letter-spacing:-0.42px">SAP.CURRENCY.VIEW.T</div>
<div class="cell" style="left:535px;top:367.5px;width:138px">Exchange Rates</div>
<div class="cell" style="left:749px;top:367.5px;width:66px;letter-spacing:-0.55px">BT_SPACE...</div>
<div class="cell" style="left:821px;top:367.5px;width:60px;letter-spacing:-0.1px">Relational</div>
<div class="a" style="left:318px;top:406px;width:552px;height:1px;background:#d5d5d5"></div>
<div class="a" style="left:318px;top:387px;width:1px;height:20px;background:#d5d5d5"></div>
<div class="a" style="left:352px;top:387px;width:1px;height:20px;background:#d5d5d5"></div>
<div class="a" style="left:386px;top:387px;width:1px;height:20px;background:#d5d5d5"></div>
<div class="a" style="left:530px;top:387px;width:1px;height:20px;background:#d5d5d5"></div>
<div class="a" style="left:674px;top:387px;width:1px;height:20px;background:#d5d5d5"></div>
<div class="a" style="left:745px;top:387px;width:1px;height:20px;background:#d5d5d5"></div>
<div class="a" style="left:816px;top:387px;width:1px;height:20px;background:#d5d5d5"></div>
<svg class="a" style="left:328px;top:390px" width="15" height="14" viewBox="0 0 15 14" ><g fill="#2e2e2e"><rect x="1" y="0" width="2" height="1.2"/><rect x="4" y="0" width="3" height="1.2"/><rect x="8" y="0" width="3" height="1.2"/>
<rect x="0" y="2" width="8.2" height="11"/><rect x="8" y="2" width="4" height="2.6" fill="#8a8a8a"/><rect x="8" y="4.6" width="6" height="9.4"/></g>
<g fill="#fff"><rect x="1.1" y="3.1" width="2" height="2"/><rect x="5" y="3.1" width="2" height="2"/><rect x="1.1" y="6.4" width="2" height="2"/><rect x="5" y="6.4" width="2" height="2"/><rect x="1.1" y="10" width="2" height="2"/><rect x="5" y="10" width="2" height="2"/>
<rect x="9.3" y="6.3" width="1.3" height="1.3"/><rect x="11.8" y="6.3" width="1.3" height="1.3"/><rect x="9.3" y="9.2" width="1.3" height="1.3"/><rect x="11.8" y="9.2" width="1.3" height="1.3"/><rect x="9.3" y="11.8" width="1.3" height="1.3"/><rect x="11.8" y="11.8" width="1.3" height="1.3"/></g></svg>
<div class="cell" style="left:357px;top:387.5px;width:28px">DVIE</div>
<div class="cell" style="left:390px;top:387.5px;width:118px;letter-spacing:-0.42px">SAP.CURRENCY.VIEW.T</div>
<div class="cell" style="left:535px;top:387.5px;width:138px">Exchange Rates</div>
<div class="cell" style="left:749px;top:387.5px;width:66px;letter-spacing:-0.55px">MBRENDLE...</div>
<div class="cell" style="left:821px;top:387.5px;width:60px;letter-spacing:-0.1px">Relational</div>
<div class="a" style="left:318px;top:426px;width:552px;height:1px;background:#d5d5d5"></div>
<div class="a" style="left:318px;top:407px;width:1px;height:20px;background:#d5d5d5"></div>
<div class="a" style="left:352px;top:407px;width:1px;height:20px;background:#d5d5d5"></div>
<div class="a" style="left:386px;top:407px;width:1px;height:20px;background:#d5d5d5"></div>
<div class="a" style="left:530px;top:407px;width:1px;height:20px;background:#d5d5d5"></div>
<div class="a" style="left:674px;top:407px;width:1px;height:20px;background:#d5d5d5"></div>
<div class="a" style="left:745px;top:407px;width:1px;height:20px;background:#d5d5d5"></div>
<div class="a" style="left:816px;top:407px;width:1px;height:20px;background:#d5d5d5"></div>
<svg class="a" style="left:328px;top:410px" width="15" height="14" viewBox="0 0 15 14" ><g fill="#2e2e2e"><rect x="1" y="0" width="2" height="1.2"/><rect x="4" y="0" width="3" height="1.2"/><rect x="8" y="0" width="3" height="1.2"/>
<rect x="0" y="2" width="8.2" height="11"/><rect x="8" y="2" width="4" height="2.6" fill="#8a8a8a"/><rect x="8" y="4.6" width="6" height="9.4"/></g>
<g fill="#fff"><rect x="1.1" y="3.1" width="2" height="2"/><rect x="5" y="3.1" width="2" height="2"/><rect x="1.1" y="6.4" width="2" height="2"/><rect x="5" y="6.4" width="2" height="2"/><rect x="1.1" y="10" width="2" height="2"/><rect x="5" y="10" width="2" height="2"/>
<rect x="9.3" y="6.3" width="1.3" height="1.3"/><rect x="11.8" y="6.3" width="1.3" height="1.3"/><rect x="9.3" y="9.2" width="1.3" height="1.3"/><rect x="11.8" y="9.2" width="1.3" height="1.3"/><rect x="9.3" y="11.8" width="1.3" height="1.3"/><rect x="11.8" y="11.8" width="1.3" height="1.3"/></g></svg>
<div class="cell" style="left:357px;top:407.5px;width:28px">DVIE</div>
<div class="cell" style="left:390px;top:407.5px;width:118px;letter-spacing:-0.42px">SAP.CURRENCY.VIEW.T</div>
<div class="cell" style="left:535px;top:407.5px;width:138px">Currency Text</div>
<div class="cell" style="left:749px;top:407.5px;width:66px;letter-spacing:-0.55px">BT_SPACE...</div>
<div class="cell" style="left:821px;top:407.5px;width:60px;letter-spacing:-0.1px">Relational</div>
<div class="a" style="left:318px;top:446px;width:552px;height:1px;background:#d5d5d5"></div>
<div class="a" style="left:318px;top:427px;width:1px;height:20px;background:#d5d5d5"></div>
<div class="a" style="left:352px;top:427px;width:1px;height:20px;background:#d5d5d5"></div>
<div class="a" style="left:386px;top:427px;width:1px;height:20px;background:#d5d5d5"></div>
<div class="a" style="left:530px;top:427px;width:1px;height:20px;background:#d5d5d5"></div>
<div class="a" style="left:674px;top:427px;width:1px;height:20px;background:#d5d5d5"></div>
<div class="a" style="left:745px;top:427px;width:1px;height:20px;background:#d5d5d5"></div>
<div class="a" style="left:816px;top:427px;width:1px;height:20px;background:#d5d5d5"></div>
<svg class="a" style="left:328px;top:430px" width="15" height="14" viewBox="0 0 15 14" ><g fill="#2e2e2e"><rect x="1" y="0" width="2" height="1.2"/><rect x="4" y="0" width="3" height="1.2"/><rect x="8" y="0" width="3" height="1.2"/>
<rect x="0" y="2" width="8.2" height="11"/><rect x="8" y="2" width="4" height="2.6" fill="#8a8a8a"/><rect x="8" y="4.6" width="6" height="9.4"/></g>
<g fill="#fff"><rect x="1.1" y="3.1" width="2" height="2"/><rect x="5" y="3.1" width="2" height="2"/><rect x="1.1" y="6.4" width="2" height="2"/><rect x="5" y="6.4" width="2" height="2"/><rect x="1.1" y="10" width="2" height="2"/><rect x="5" y="10" width="2" height="2"/>
<rect x="9.3" y="6.3" width="1.3" height="1.3"/><rect x="11.8" y="6.3" width="1.3" height="1.3"/><rect x="9.3" y="9.2" width="1.3" height="1.3"/><rect x="11.8" y="9.2" width="1.3" height="1.3"/><rect x="9.3" y="11.8" width="1.3" height="1.3"/><rect x="11.8" y="11.8" width="1.3" height="1.3"/></g></svg>
<div class="cell" style="left:357px;top:427.5px;width:28px">DVIE</div>
<div class="cell" style="left:390px;top:427.5px;width:118px;letter-spacing:-0.42px">SAP.CURRENCY.VIEW.T</div>
<div class="cell" style="left:535px;top:427.5px;width:138px">Currency Text</div>
<div class="cell" style="left:749px;top:427.5px;width:66px;letter-spacing:-0.55px">MBRENDLE...</div>
<div class="cell" style="left:821px;top:427.5px;width:60px;letter-spacing:-0.1px">Relational</div>
<div class="a" style="left:318px;top:466px;width:552px;height:1px;background:#d5d5d5"></div>
<div class="a" style="left:318px;top:447px;width:1px;height:20px;background:#d5d5d5"></div>
<div class="a" style="left:352px;top:447px;width:1px;height:20px;background:#d5d5d5"></div>
<div class="a" style="left:386px;top:447px;width:1px;height:20px;background:#d5d5d5"></div>
<div class="a" style="left:530px;top:447px;width:1px;height:20px;background:#d5d5d5"></div>
<div class="a" style="left:674px;top:447px;width:1px;height:20px;background:#d5d5d5"></div>
<div class="a" style="left:745px;top:447px;width:1px;height:20px;background:#d5d5d5"></div>
<div class="a" style="left:816px;top:447px;width:1px;height:20px;background:#d5d5d5"></div>
<svg class="a" style="left:328px;top:450px" width="15" height="14" viewBox="0 0 15 14" ><g fill="#2e2e2e"><rect x="1" y="0" width="2" height="1.2"/><rect x="4" y="0" width="3" height="1.2"/><rect x="8" y="0" width="3" height="1.2"/>
<rect x="0" y="2" width="8.2" height="11"/><rect x="8" y="2" width="4" height="2.6" fill="#8a8a8a"/><rect x="8" y="4.6" width="6" height="9.4"/></g>
<g fill="#fff"><rect x="1.1" y="3.1" width="2" height="2"/><rect x="5" y="3.1" width="2" height="2"/><rect x="1.1" y="6.4" width="2" height="2"/><rect x="5" y="6.4" width="2" height="2"/><rect x="1.1" y="10" width="2" height="2"/><rect x="5" y="10" width="2" height="2"/>
<rect x="9.3" y="6.3" width="1.3" height="1.3"/><rect x="11.8" y="6.3" width="1.3" height="1.3"/><rect x="9.3" y="9.2" width="1.3" height="1.3"/><rect x="11.8" y="9.2" width="1.3" height="1.3"/><rect x="9.3" y="11.8" width="1.3" height="1.3"/><rect x="11.8" y="11.8" width="1.3" height="1.3"/></g></svg>
<div class="cell" style="left:357px;top:447.5px;width:28px">DVIE</div>
<div class="cell" style="left:390px;top:447.5px;width:118px;letter-spacing:-0.42px">SAP.CURRENCY.VIEW.T</div>
<div class="cell" style="left:535px;top:447.5px;width:138px">Exchange Rate Types</div>
<div class="cell" style="left:749px;top:447.5px;width:66px;letter-spacing:-0.55px">MBRENDLE...</div>
<div class="cell" style="left:821px;top:447.5px;width:60px;letter-spacing:-0.1px">Relational</div>
<div class="a" style="left:318px;top:486px;width:552px;height:1px;background:#d5d5d5"></div>
<div class="a" style="left:318px;top:467px;width:1px;height:20px;background:#d5d5d5"></div>
<div class="a" style="left:352px;top:467px;width:1px;height:20px;background:#d5d5d5"></div>
<div class="a" style="left:386px;top:467px;width:1px;height:20px;background:#d5d5d5"></div>
<div class="a" style="left:530px;top:467px;width:1px;height:20px;background:#d5d5d5"></div>
<div class="a" style="left:674px;top:467px;width:1px;height:20px;background:#d5d5d5"></div>
<div class="a" style="left:745px;top:467px;width:1px;height:20px;background:#d5d5d5"></div>
<div class="a" style="left:816px;top:467px;width:1px;height:20px;background:#d5d5d5"></div>
<svg class="a" style="left:328px;top:470px" width="15" height="14" viewBox="0 0 15 14" ><g fill="#2e2e2e"><rect x="1" y="0" width="2" height="1.2"/><rect x="4" y="0" width="3" height="1.2"/><rect x="8" y="0" width="3" height="1.2"/>
<rect x="0" y="2" width="8.2" height="11"/><rect x="8" y="2" width="4" height="2.6" fill="#8a8a8a"/><rect x="8" y="4.6" width="6" height="9.4"/></g>
<g fill="#fff"><rect x="1.1" y="3.1" width="2" height="2"/><rect x="5" y="3.1" width="2" height="2"/><rect x="1.1" y="6.4" width="2" height="2"/><rect x="5" y="6.4" width="2" height="2"/><rect x="1.1" y="10" width="2" height="2"/><rect x="5" y="10" width="2" height="2"/>
<rect x="9.3" y="6.3" width="1.3" height="1.3"/><rect x="11.8" y="6.3" width="1.3" height="1.3"/><rect x="9.3" y="9.2" width="1.3" height="1.3"/><rect x="11.8" y="9.2" width="1.3" height="1.3"/><rect x="9.3" y="11.8" width="1.3" height="1.3"/><rect x="11.8" y="11.8" width="1.3" height="1.3"/></g></svg>
<div class="cell" style="left:357px;top:467.5px;width:28px">DVIE</div>
<div class="a" style="left:387px;top:467px;width:143px;height:19px;background:#306bc3"></div>
<div class="cell" style="left:390px;top:467.5px;width:118px;color:#fff;letter-spacing:-0.42px">SAP.CURRENCY.VIEW.T</div>
<div class="cell" style="left:535px;top:467.5px;width:138px">Exchange Rate Types</div>
<div class="cell" style="left:749px;top:467.5px;width:66px;letter-spacing:-0.55px">BT_SPACE...</div>
<div class="cell" style="left:821px;top:467.5px;width:60px;letter-spacing:-0.1px">Relational</div>
<div class="a" style="left:318px;top:506px;width:552px;height:1px;background:#d5d5d5"></div>
<div class="a" style="left:318px;top:487px;width:1px;height:20px;background:#d5d5d5"></div>
<div class="a" style="left:352px;top:487px;width:1px;height:20px;background:#d5d5d5"></div>
<div class="a" style="left:386px;top:487px;width:1px;height:20px;background:#d5d5d5"></div>
<div class="a" style="left:530px;top:487px;width:1px;height:20px;background:#d5d5d5"></div>
<div class="a" style="left:674px;top:487px;width:1px;height:20px;background:#d5d5d5"></div>
<div class="a" style="left:745px;top:487px;width:1px;height:20px;background:#d5d5d5"></div>
<div class="a" style="left:816px;top:487px;width:1px;height:20px;background:#d5d5d5"></div>
<svg class="a" style="left:328px;top:490px" width="15" height="14" viewBox="0 0 15 14" ><g fill="#2e2e2e"><rect x="1" y="0" width="2" height="1.2"/><rect x="4" y="0" width="3" height="1.2"/><rect x="8" y="0" width="3" height="1.2"/>
<rect x="0" y="2" width="8.2" height="11"/><rect x="8" y="2" width="4" height="2.6" fill="#8a8a8a"/><rect x="8" y="4.6" width="6" height="9.4"/></g>
<g fill="#fff"><rect x="1.1" y="3.1" width="2" height="2"/><rect x="5" y="3.1" width="2" height="2"/><rect x="1.1" y="6.4" width="2" height="2"/><rect x="5" y="6.4" width="2" height="2"/><rect x="1.1" y="10" width="2" height="2"/><rect x="5" y="10" width="2" height="2"/>
<rect x="9.3" y="6.3" width="1.3" height="1.3"/><rect x="11.8" y="6.3" width="1.3" height="1.3"/><rect x="9.3" y="9.2" width="1.3" height="1.3"/><rect x="11.8" y="9.2" width="1.3" height="1.3"/><rect x="9.3" y="11.8" width="1.3" height="1.3"/><rect x="11.8" y="11.8" width="1.3" height="1.3"/></g></svg>
<div class="cell" style="left:357px;top:487.5px;width:28px">DVIE</div>
<div class="a" style="left:387px;top:487px;width:143px;height:19px;background:#306bc3"></div>
<div class="cell" style="left:390px;top:487.5px;width:118px;color:#fff;letter-spacing:-0.42px">SAP.CURRENCY.VIEW.T</div>
<div class="cell" style="left:535px;top:487.5px;width:138px">Exchange Rate Types</div>
<div class="cell" style="left:749px;top:487.5px;width:66px;letter-spacing:-0.55px">MBRENDLE...</div>
<div class="cell" style="left:821px;top:487.5px;width:60px;letter-spacing:-0.1px">Relational</div>
<div class="a" style="left:318px;top:526px;width:552px;height:1px;background:#d5d5d5"></div>
<div class="a" style="left:318px;top:507px;width:1px;height:20px;background:#d5d5d5"></div>
<div class="a" style="left:352px;top:507px;width:1px;height:20px;background:#d5d5d5"></div>
<div class="a" style="left:386px;top:507px;width:1px;height:20px;background:#d5d5d5"></div>
<div class="a" style="left:530px;top:507px;width:1px;height:20px;background:#d5d5d5"></div>
<div class="a" style="left:674px;top:507px;width:1px;height:20px;background:#d5d5d5"></div>
<div class="a" style="left:745px;top:507px;width:1px;height:20px;background:#d5d5d5"></div>
<div class="a" style="left:816px;top:507px;width:1px;height:20px;background:#d5d5d5"></div>
<svg class="a" style="left:328px;top:510px" width="15" height="14" viewBox="0 0 15 14" ><g fill="#2e2e2e"><rect x="1" y="0" width="2" height="1.2"/><rect x="4" y="0" width="3" height="1.2"/><rect x="8" y="0" width="3" height="1.2"/>
<rect x="0" y="2" width="8.2" height="11"/><rect x="8" y="2" width="4" height="2.6" fill="#8a8a8a"/><rect x="8" y="4.6" width="6" height="9.4"/></g>
<g fill="#fff"><rect x="1.1" y="3.1" width="2" height="2"/><rect x="5" y="3.1" width="2" height="2"/><rect x="1.1" y="6.4" width="2" height="2"/><rect x="5" y="6.4" width="2" height="2"/><rect x="1.1" y="10" width="2" height="2"/><rect x="5" y="10" width="2" height="2"/>
<rect x="9.3" y="6.3" width="1.3" height="1.3"/><rect x="11.8" y="6.3" width="1.3" height="1.3"/><rect x="9.3" y="9.2" width="1.3" height="1.3"/><rect x="11.8" y="9.2" width="1.3" height="1.3"/><rect x="9.3" y="11.8" width="1.3" height="1.3"/><rect x="11.8" y="11.8" width="1.3" height="1.3"/></g></svg>
<div class="cell" style="left:357px;top:507.5px;width:28px">DVIE</div>
<div class="a" style="left:387px;top:507px;width:143px;height:19px;background:#306bc3"></div>
<div class="cell" style="left:390px;top:507.5px;width:118px;color:#fff;letter-spacing:-0.42px">SAP.CURRENCY.VIEW.T</div>
<div class="cell" style="left:535px;top:507.5px;width:138px">Exchange Rate Types</div>
<div class="cell" style="left:749px;top:507.5px;width:66px;letter-spacing:-0.55px">BT_SPACE...</div>
<div class="cell" style="left:821px;top:507.5px;width:60px;letter-spacing:-0.1px">Relational</div>
<div class="a" style="left:318px;top:546px;width:552px;height:1px;background:#d5d5d5"></div>
<div class="a" style="left:318px;top:527px;width:1px;height:20px;background:#d5d5d5"></div>
<div class="a" style="left:352px;top:527px;width:1px;height:20px;background:#d5d5d5"></div>
<div class="a" style="left:386px;top:527px;width:1px;height:20px;background:#d5d5d5"></div>
<div class="a" style="left:530px;top:527px;width:1px;height:20px;background:#d5d5d5"></div>
<div class="a" style="left:674px;top:527px;width:1px;height:20px;background:#d5d5d5"></div>
<div class="a" style="left:745px;top:527px;width:1px;height:20px;background:#d5d5d5"></div>
<div class="a" style="left:816px;top:527px;width:1px;height:20px;background:#d5d5d5"></div>
<svg class="a" style="left:328px;top:530px" width="15" height="14" viewBox="0 0 15 14" ><g fill="#2e2e2e"><rect x="1" y="0" width="2" height="1.2"/><rect x="4" y="0" width="3" height="1.2"/><rect x="8" y="0" width="3" height="1.2"/>
<rect x="0" y="2" width="8.2" height="11"/><rect x="8" y="2" width="4" height="2.6" fill="#8a8a8a"/><rect x="8" y="4.6" width="6" height="9.4"/></g>
<g fill="#fff"><rect x="1.1" y="3.1" width="2" height="2"/><rect x="5" y="3.1" width="2" height="2"/><rect x="1.1" y="6.4" width="2" height="2"/><rect x="5" y="6.4" width="2" height="2"/><rect x="1.1" y="10" width="2" height="2"/><rect x="5" y="10" width="2" height="2"/>
<rect x="9.3" y="6.3" width="1.3" height="1.3"/><rect x="11.8" y="6.3" width="1.3" height="1.3"/><rect x="9.3" y="9.2" width="1.3" height="1.3"/><rect x="11.8" y="9.2" width="1.3" height="1.3"/><rect x="9.3" y="11.8" width="1.3" height="1.3"/><rect x="11.8" y="11.8" width="1.3" height="1.3"/></g></svg>
<div class="cell" style="left:357px;top:527.5px;width:28px">DVIE</div>
<div class="a" style="left:387px;top:527px;width:143px;height:19px;background:#306bc3"></div>
<div class="cell" style="left:390px;top:527.5px;width:118px;color:#fff;letter-spacing:-0.42px">SAP.CURRENCY.VIEW.T</div>
<div class="cell" style="left:535px;top:527.5px;width:138px">Exchange Rate Types</div>
<div class="cell" style="left:749px;top:527.5px;width:66px;letter-spacing:-0.55px">BT_SPACE...</div>
<div class="cell" style="left:821px;top:527.5px;width:60px;letter-spacing:-0.1px">Relational</div>
<div class="a" style="left:318px;top:566px;width:552px;height:1px;background:#d5d5d5"></div>
<div class="a" style="left:318px;top:547px;width:1px;height:20px;background:#d5d5d5"></div>
<div class="a" style="left:352px;top:547px;width:1px;height:20px;background:#d5d5d5"></div>
<div class="a" style="left:386px;top:547px;width:1px;height:20px;background:#d5d5d5"></div>
<div class="a" style="left:530px;top:547px;width:1px;height:20px;background:#d5d5d5"></div>
<div class="a" style="left:674px;top:547px;width:1px;height:20px;background:#d5d5d5"></div>
<div class="a" style="left:745px;top:547px;width:1px;height:20px;background:#d5d5d5"></div>
<div class="a" style="left:816px;top:547px;width:1px;height:20px;background:#d5d5d5"></div>
<svg class="a" style="left:328px;top:550px" width="15" height="14" viewBox="0 0 15 14" ><g fill="#2e2e2e"><rect x="1" y="0" width="2" height="1.2"/><rect x="4" y="0" width="3" height="1.2"/><rect x="8" y="0" width="3" height="1.2"/>
<rect x="0" y="2" width="8.2" height="11"/><rect x="8" y="2" width="4" height="2.6" fill="#8a8a8a"/><rect x="8" y="4.6" width="6" height="9.4"/></g>
<g fill="#fff"><rect x="1.1" y="3.1" width="2" height="2"/><rect x="5" y="3.1" width="2" height="2"/><rect x="1.1" y="6.4" width="2" height="2"/><rect x="5" y="6.4" width="2" height="2"/><rect x="1.1" y="10" width="2" height="2"/><rect x="5" y="10" width="2" height="2"/>
<rect x="9.3" y="6.3" width="1.3" height="1.3"/><rect x="11.8" y="6.3" width="1.3" height="1.3"/><rect x="9.3" y="9.2" width="1.3" height="1.3"/><rect x="11.8" y="9.2" width="1.3" height="1.3"/><rect x="9.3" y="11.8" width="1.3" height="1.3"/><rect x="11.8" y="11.8" width="1.3" height="1.3"/></g></svg>
<div class="cell" style="left:357px;top:547.5px;width:28px">DVIE</div>
<div class="a" style="left:387px;top:547px;width:143px;height:19px;background:#306bc3"></div>
<div class="cell" style="left:390px;top:547.5px;width:118px;color:#fff;letter-spacing:-0.42px">SAP.CURRENCY.VIEW.T</div>
<div class="cell" style="left:535px;top:547.5px;width:138px">Exchange Rate Types</div>
<div class="cell" style="left:749px;top:547.5px;width:66px;letter-spacing:-0.55px">MBRENDLE...</div>
<div class="cell" style="left:821px;top:547.5px;width:60px;letter-spacing:-0.1px">Relational</div>
<div class="a" style="left:318px;top:586px;width:552px;height:1px;background:#d5d5d5"></div>
<div class="a" style="left:318px;top:567px;width:1px;height:20px;background:#d5d5d5"></div>
<div class="a" style="left:352px;top:567px;width:1px;height:20px;background:#d5d5d5"></div>
<div class="a" style="left:386px;top:567px;width:1px;height:20px;background:#d5d5d5"></div>
<div class="a" style="left:530px;top:567px;width:1px;height:20px;background:#d5d5d5"></div>
<div class="a" style="left:674px;top:567px;width:1px;height:20px;background:#d5d5d5"></div>
<div class="a" style="left:745px;top:567px;width:1px;height:20px;background:#d5d5d5"></div>
<div class="a" style="left:816px;top:567px;width:1px;height:20px;background:#d5d5d5"></div>
<svg class="a" style="left:328px;top:570px" width="15" height="14" viewBox="0 0 15 14" ><g fill="#2e2e2e"><rect x="1" y="0" width="2" height="1.2"/><rect x="4" y="0" width="3" height="1.2"/><rect x="8" y="0" width="3" height="1.2"/>
<rect x="0" y="2" width="8.2" height="11"/><rect x="8" y="2" width="4" height="2.6" fill="#8a8a8a"/><rect x="8" y="4.6" width="6" height="9.4"/></g>
<g fill="#fff"><rect x="1.1" y="3.1" width="2" height="2"/><rect x="5" y="3.1" width="2" height="2"/><rect x="1.1" y="6.4" width="2" height="2"/><rect x="5" y="6.4" width="2" height="2"/><rect x="1.1" y="10" width="2" height="2"/><rect x="5" y="10" width="2" height="2"/>
<rect x="9.3" y="6.3" width="1.3" height="1.3"/><rect x="11.8" y="6.3" width="1.3" height="1.3"/><rect x="9.3" y="9.2" width="1.3" height="1.3"/><rect x="11.8" y="9.2" width="1.3" height="1.3"/><rect x="9.3" y="11.8" width="1.3" height="1.3"/><rect x="11.8" y="11.8" width="1.3" height="1.3"/></g></svg>
<div class="cell" style="left:357px;top:567.5px;width:28px">DVIE</div>
<div class="a" style="left:387px;top:567px;width:143px;height:19px;background:#306bc3"></div>
<div class="cell" style="left:390px;top:567.5px;width:118px;color:#fff;letter-spacing:-0.42px">SAP.TIME.VIEW_DIMENSION</div>
<div class="cell" style="left:535px;top:567.5px;width:138px">Time Dimension - Day</div>
<div class="cell" style="left:749px;top:567.5px;width:66px;letter-spacing:-0.55px">MBRENDLE...</div>
<div class="cell" style="left:821px;top:567.5px;width:60px;letter-spacing:-0.1px">Dimension</div>
<div class="a" style="left:318px;top:606px;width:552px;height:1px;background:#d5d5d5"></div>
<div class="a" style="left:318px;top:587px;width:1px;height:20px;background:#d5d5d5"></div>
<div class="a" style="left:352px;top:587px;width:1px;height:20px;background:#d5d5d5"></div>
<div class="a" style="left:386px;top:587px;width:1px;height:20px;background:#d5d5d5"></div>
<div class="a" style="left:530px;top:587px;width:1px;height:20px;background:#d5d5d5"></div>
<div class="a" style="left:674px;top:587px;width:1px;height:20px;background:#d5d5d5"></div>
<div class="a" style="left:745px;top:587px;width:1px;height:20px;background:#d5d5d5"></div>
<div class="a" style="left:816px;top:587px;width:1px;height:20px;background:#d5d5d5"></div>
<svg class="a" style="left:328px;top:590px" width="15" height="14" viewBox="0 0 15 14" ><g fill="#2e2e2e"><rect x="1" y="0" width="2" height="1.2"/><rect x="4" y="0" width="3" height="1.2"/><rect x="8" y="0" width="3" height="1.2"/>
<rect x="0" y="2" width="8.2" height="11"/><rect x="8" y="2" width="4" height="2.6" fill="#8a8a8a"/><rect x="8" y="4.6" width="6" height="9.4"/></g>
<g fill="#fff"><rect x="1.1" y="3.1" width="2" height="2"/><rect x="5" y="3.1" width="2" height="2"/><rect x="1.1" y="6.4" width="2" height="2"/><rect x="5" y="6.4" width="2" height="2"/><rect x="1.1" y="10" width="2" height="2"/><rect x="5" y="10" width="2" height="2"/>
<rect x="9.3" y="6.3" width="1.3" height="1.3"/><rect x="11.8" y="6.3" width="1.3" height="1.3"/><rect x="9.3" y="9.2" width="1.3" height="1.3"/><rect x="11.8" y="9.2" width="1.3" height="1.3"/><rect x="9.3" y="11.8" width="1.3" height="1.3"/><rect x="11.8" y="11.8" width="1.3" height="1.3"/></g></svg>
<div class="cell" style="left:357px;top:587.5px;width:28px">DVIE</div>
<div class="cell" style="left:390px;top:587.5px;width:118px;letter-spacing:-0.42px">SAP.TIME.VIEW_DIMENSION</div>
<div class="cell" style="left:535px;top:587.5px;width:138px">Time Dimension - Day</div>
<div class="cell" style="left:749px;top:587.5px;width:66px;letter-spacing:-0.55px">BT_SPACE...</div>
<div class="cell" style="left:821px;top:587.5px;width:60px;letter-spacing:-0.1px">Dimension</div>
<div class="a" style="left:318px;top:626px;width:552px;height:1px;background:#d5d5d5"></div>
<div class="a" style="left:318px;top:607px;width:1px;height:20px;background:#d5d5d5"></div>
<div class="a" style="left:352px;top:607px;width:1px;height:20px;background:#d5d5d5"></div>
<div class="a" style="left:386px;top:607px;width:1px;height:20px;background:#d5d5d5"></div>
<div class="a" style="left:530px;top:607px;width:1px;height:20px;background:#d5d5d5"></div>
<div class="a" style="left:674px;top:607px;width:1px;height:20px;background:#d5d5d5"></div>
<div class="a" style="left:745px;top:607px;width:1px;height:20px;background:#d5d5d5"></div>
<div class="a" style="left:816px;top:607px;width:1px;height:20px;background:#d5d5d5"></div>
<svg class="a" style="left:328px;top:610px" width="15" height="14" viewBox="0 0 15 14" ><g fill="#2e2e2e"><rect x="1" y="0" width="2" height="1.2"/><rect x="4" y="0" width="3" height="1.2"/><rect x="8" y="0" width="3" height="1.2"/>
<rect x="0" y="2" width="8.2" height="11"/><rect x="8" y="2" width="4" height="2.6" fill="#8a8a8a"/><rect x="8" y="4.6" width="6" height="9.4"/></g>
<g fill="#fff"><rect x="1.1" y="3.1" width="2" height="2"/><rect x="5" y="3.1" width="2" height="2"/><rect x="1.1" y="6.4" width="2" height="2"/><rect x="5" y="6.4" width="2" height="2"/><rect x="1.1" y="10" width="2" height="2"/><rect x="5" y="10" width="2" height="2"/>
<rect x="9.3" y="6.3" width="1.3" height="1.3"/><rect x="11.8" y="6.3" width="1.3" height="1.3"/><rect x="9.3" y="9.2" width="1.3" height="1.3"/><rect x="11.8" y="9.2" width="1.3" height="1.3"/><rect x="9.3" y="11.8" width="1.3" height="1.3"/><rect x="11.8" y="11.8" width="1.3" height="1.3"/></g></svg>
<div class="cell" style="left:357px;top:607.5px;width:28px">DVIE</div>
<div class="cell" style="left:390px;top:607.5px;width:118px;letter-spacing:-0.42px">SAP.TIME.VIEW_DIMENSION</div>
<div class="cell" style="left:535px;top:607.5px;width:138px">Time Dimension - Day</div>
<div class="cell" style="left:749px;top:607.5px;width:66px;letter-spacing:-0.55px">SAP_CONT...</div>
<div class="cell" style="left:821px;top:607.5px;width:60px;letter-spacing:-0.1px">Dimension</div>
<div class="a" style="left:318px;top:646px;width:552px;height:1px;background:#d5d5d5"></div>
<div class="a" style="left:318px;top:627px;width:1px;height:20px;background:#d5d5d5"></div>
<div class="a" style="left:352px;top:627px;width:1px;height:20px;background:#d5d5d5"></div>
<div class="a" style="left:386px;top:627px;width:1px;height:20px;background:#d5d5d5"></div>
<div class="a" style="left:530px;top:627px;width:1px;height:20px;background:#d5d5d5"></div>
<div class="a" style="left:674px;top:627px;width:1px;height:20px;background:#d5d5d5"></div>
<div class="a" style="left:745px;top:627px;width:1px;height:20px;background:#d5d5d5"></div>
<div class="a" style="left:816px;top:627px;width:1px;height:20px;background:#d5d5d5"></div>
<svg class="a" style="left:328px;top:630px" width="15" height="14" viewBox="0 0 15 14" ><g fill="#2e2e2e"><rect x="1" y="0" width="2" height="1.2"/><rect x="4" y="0" width="3" height="1.2"/><rect x="8" y="0" width="3" height="1.2"/>
<rect x="0" y="2" width="8.2" height="11"/><rect x="8" y="2" width="4" height="2.6" fill="#8a8a8a"/><rect x="8" y="4.6" width="6" height="9.4"/></g>
<g fill="#fff"><rect x="1.1" y="3.1" width="2" height="2"/><rect x="5" y="3.1" width="2" height="2"/><rect x="1.1" y="6.4" width="2" height="2"/><rect x="5" y="6.4" width="2" height="2"/><rect x="1.1" y="10" width="2" height="2"/><rect x="5" y="10" width="2" height="2"/>
<rect x="9.3" y="6.3" width="1.3" height="1.3"/><rect x="11.8" y="6.3" width="1.3" height="1.3"/><rect x="9.3" y="9.2" width="1.3" height="1.3"/><rect x="11.8" y="9.2" width="1.3" height="1.3"/><rect x="9.3" y="11.8" width="1.3" height="1.3"/><rect x="11.8" y="11.8" width="1.3" height="1.3"/></g></svg>
<div class="cell" style="left:357px;top:627.5px;width:28px">DVIE</div>
<div class="cell" style="left:390px;top:627.5px;width:118px;letter-spacing:-0.42px">SAP.TIME.VIEW_DIMENSION</div>
<div class="cell" style="left:535px;top:627.5px;width:138px">Time Dimension - Month</div>
<div class="cell" style="left:749px;top:627.5px;width:66px;letter-spacing:-0.55px">BT_SPACE...</div>
<div class="cell" style="left:821px;top:627.5px;width:60px;letter-spacing:-0.1px">Dimension</div>
<div class="a" style="left:318px;top:666px;width:552px;height:1px;background:#d5d5d5"></div>
<div class="a" style="left:318px;top:647px;width:1px;height:20px;background:#d5d5d5"></div>
<div class="a" style="left:352px;top:647px;width:1px;height:20px;background:#d5d5d5"></div>
<div class="a" style="left:386px;top:647px;width:1px;height:20px;background:#d5d5d5"></div>
<div class="a" style="left:530px;top:647px;width:1px;height:20px;background:#d5d5d5"></div>
<div class="a" style="left:674px;top:647px;width:1px;height:20px;background:#d5d5d5"></div>
<div class="a" style="left:745px;top:647px;width:1px;height:20px;background:#d5d5d5"></div>
<div class="a" style="left:816px;top:647px;width:1px;height:20px;background:#d5d5d5"></div>
<svg class="a" style="left:328px;top:650px" width="15" height="14" viewBox="0 0 15 14" ><g fill="#2e2e2e"><rect x="1" y="0" width="2" height="1.2"/><rect x="4" y="0" width="3" height="1.2"/><rect x="8" y="0" width="3" height="1.2"/>
<rect x="0" y="2" width="8.2" height="11"/><rect x="8" y="2" width="4" height="2.6" fill="#8a8a8a"/><rect x="8" y="4.6" width="6" height="9.4"/></g>
<g fill="#fff"><rect x="1.1" y="3.1" width="2" height="2"/><rect x="5" y="3.1" width="2" height="2"/><rect x="1.1" y="6.4" width="2" height="2"/><rect x="5" y="6.4" width="2" height="2"/><rect x="1.1" y="10" width="2" height="2"/><rect x="5" y="10" width="2" height="2"/>
<rect x="9.3" y="6.3" width="1.3" height="1.3"/><rect x="11.8" y="6.3" width="1.3" height="1.3"/><rect x="9.3" y="9.2" width="1.3" height="1.3"/><rect x="11.8" y="9.2" width="1.3" height="1.3"/><rect x="9.3" y="11.8" width="1.3" height="1.3"/><rect x="11.8" y="11.8" width="1.3" height="1.3"/></g></svg>
<div class="cell" style="left:357px;top:647.5px;width:28px">DVIE</div>
<div class="cell" style="left:390px;top:647.5px;width:118px;letter-spacing:-0.42px">SAP.TIME.VIEW_DIMENSION</div>
<div class="cell" style="left:535px;top:647.5px;width:138px">Time Dimension - Month</div>
<div class="cell" style="left:749px;top:647.5px;width:66px;letter-spacing:-0.55px">MBRENDLE...</div>
<div class="cell" style="left:821px;top:647.5px;width:60px;letter-spacing:-0.1px">Dimension</div>
<div class="a" style="left:318px;top:686px;width:552px;height:1px;background:#d5d5d5"></div>
<div class="a" style="left:318px;top:667px;width:1px;height:20px;background:#d5d5d5"></div>
<div class="a" style="left:352px;top:667px;width:1px;height:20px;background:#d5d5d5"></div>
<div class="a" style="left:386px;top:667px;width:1px;height:20px;background:#d5d5d5"></div>
<div class="a" style="left:530px;top:667px;width:1px;height:20px;background:#d5d5d5"></div>
<div class="a" style="left:674px;top:667px;width:1px;height:20px;background:#d5d5d5"></div>
<div class="a" style="left:745px;top:667px;width:1px;height:20px;background:#d5d5d5"></div>
<div class="a" style="left:816px;top:667px;width:1px;height:20px;background:#d5d5d5"></div>
<svg class="a" style="left:328px;top:670px" width="15" height="14" viewBox="0 0 15 14" ><g fill="#2e2e2e"><rect x="1" y="0" width="2" height="1.2"/><rect x="4" y="0" width="3" height="1.2"/><rect x="8" y="0" width="3" height="1.2"/>
<rect x="0" y="2" width="8.2" height="11"/><rect x="8" y="2" width="4" height="2.6" fill="#8a8a8a"/><rect x="8" y="4.6" width="6" height="9.4"/></g>
<g fill="#fff"><rect x="1.1" y="3.1" width="2" height="2"/><rect x="5" y="3.1" width="2" height="2"/><rect x="1.1" y="6.4" width="2" height="2"/><rect x="5" y="6.4" width="2" height="2"/><rect x="1.1" y="10" width="2" height="2"/><rect x="5" y="10" width="2" height="2"/>
<rect x="9.3" y="6.3" width="1.3" height="1.3"/><rect x="11.8" y="6.3" width="1.3" height="1.3"/><rect x="9.3" y="9.2" width="1.3" height="1.3"/><rect x="11.8" y="9.2" width="1.3" height="1.3"/><rect x="9.3" y="11.8" width="1.3" height="1.3"/><rect x="11.8" y="11.8" width="1.3" height="1.3"/></g></svg>
<div class="cell" style="left:357px;top:667.5px;width:28px">DVIE</div>
<div class="cell" style="left:390px;top:667.5px;width:118px;letter-spacing:-0.42px">SAP.TIME.VIEW_DIMENSION</div>
<div class="cell" style="left:535px;top:667.5px;width:138px">Time Dimension - Month</div>
<div class="cell" style="left:749px;top:667.5px;width:66px;letter-spacing:-0.55px">SAP_CONT...</div>
<div class="cell" style="left:821px;top:667.5px;width:60px;letter-spacing:-0.1px">Dimension</div>
<div class="a" style="left:318px;top:706px;width:552px;height:1px;background:#d5d5d5"></div>
<div class="a" style="left:318px;top:687px;width:1px;height:20px;background:#d5d5d5"></div>
<div class="a" style="left:352px;top:687px;width:1px;height:20px;background:#d5d5d5"></div>
<div class="a" style="left:386px;top:687px;width:1px;height:20px;background:#d5d5d5"></div>
<div class="a" style="left:530px;top:687px;width:1px;height:20px;background:#d5d5d5"></div>
<div class="a" style="left:674px;top:687px;width:1px;height:20px;background:#d5d5d5"></div>
<div class="a" style="left:745px;top:687px;width:1px;height:20px;background:#d5d5d5"></div>
<div class="a" style="left:816px;top:687px;width:1px;height:20px;background:#d5d5d5"></div>
<svg class="a" style="left:328px;top:690px" width="15" height="14" viewBox="0 0 15 14" ><g fill="#2e2e2e"><rect x="1" y="0" width="2" height="1.2"/><rect x="4" y="0" width="3" height="1.2"/><rect x="8" y="0" width="3" height="1.2"/>
<rect x="0" y="2" width="8.2" height="11"/><rect x="8" y="2" width="4" height="2.6" fill="#8a8a8a"/><rect x="8" y="4.6" width="6" height="9.4"/></g>
<g fill="#fff"><rect x="1.1" y="3.1" width="2" height="2"/><rect x="5" y="3.1" width="2" height="2"/><rect x="1.1" y="6.4" width="2" height="2"/><rect x="5" y="6.4" width="2" height="2"/><rect x="1.1" y="10" width="2" height="2"/><rect x="5" y="10" width="2" height="2"/>
<rect x="9.3" y="6.3" width="1.3" height="1.3"/><rect x="11.8" y="6.3" width="1.3" height="1.3"/><rect x="9.3" y="9.2" width="1.3" height="1.3"/><rect x="11.8" y="9.2" width="1.3" height="1.3"/><rect x="9.3" y="11.8" width="1.3" height="1.3"/><rect x="11.8" y="11.8" width="1.3" height="1.3"/></g></svg>
<div class="cell" style="left:357px;top:687.5px;width:28px">DVIE</div>
<div class="cell" style="left:390px;top:687.5px;width:118px;letter-spacing:-0.42px">SAP.TIME.VIEW_DIMENS(</div>
<div class="cell" style="left:535px;top:687.5px;width:138px">Time Dimension - Quarter</div>
<div class="cell" style="left:749px;top:687.5px;width:66px;letter-spacing:-0.55px">BT_SPACE...</div>
<div class="cell" style="left:821px;top:687.5px;width:60px;letter-spacing:-0.1px">Dimension</div>
<div class="a" style="left:309px;top:473px;width:0;height:0;border-top:4px solid transparent;border-bottom:4px solid transparent;border-left:4px solid #333"></div>
<div class="a" style="left:463px;top:485px;width:230px;height:197px;background:#fff;border:1px solid #a0a0a0;box-shadow:2px 2px 3px rgba(0,0,0,0.13)"></div>
<div class="a" style="left:465px;top:633px;width:226px;height:22px;background:#bababa"></div>
<div class="cm" style="left:498px;top:490px">Assign Layer</div>
<div class="arr" style="top:494.5px"></div>
<div class="cm" style="left:498px;top:515px">Scenario Assignment and Usage</div>
<div class="cm" style="left:498px;top:538px">Scenario Quick Assignment</div>
<div class="arr" style="top:542.5px"></div>
<div class="cm" style="left:498px;top:563px">Create Documentation</div>
<div class="arr" style="top:567.5px"></div>
<div class="cm" style="left:498px;top:586px">Open Documentation</div>
<div class="arr" style="top:590.5px"></div>
<div class="cm" style="left:498px;top:611px">Comments</div>
<div class="arr" style="top:615.5px"></div>
<div class="cm" style="left:498px;top:636px">System Scout</div>
<div class="arr" style="top:640.5px"></div>
<div class="cm" style="left:498px;top:661px">Others</div>
<div class="arr" style="top:665.5px"></div>
<div class="cms" style="top:510px"></div>
<div class="cms" style="top:558px"></div>
<div class="cms" style="top:606px"></div>
<div class="cms" style="top:631px"></div>
<div class="cms" style="top:656px"></div>
<svg class="a" style="left:464px;top:486px" width="24" height="22" viewBox="0 0 24 22" ><path d="M8 11 H16 L20 15.3 V18 H4 V15.3z" fill="#62aef0"/><rect x="4" y="16.5" width="16" height="1.6" fill="#1a68be"/>
<path d="M8 7.4 H16 L20 11.6 V13.6 H4 V11.6z" fill="#7cbcf2"/><rect x="4" y="12.2" width="16" height="1.5" fill="#1e70c8"/><rect x="8" y="11" width="8" height="1" fill="#2a7ad0"/>
<path d="M8.4 4 H15.8 L19.9 8.2 V9.6 H4.1 V8.2z" fill="#90cbf6"/><rect x="4.1" y="8.6" width="15.8" height="1" fill="#4a98e0"/><rect x="8" y="7.2" width="8" height="1" fill="#2a7ad0"/>
<path d="M5 8.3 L8.6 4.6 M19 8.3 L15.5 4.6" stroke="#d8eefc" stroke-width="0.8"/></svg>
<svg class="a" style="left:469px;top:515px" width="15" height="16" viewBox="0 0 15 16" ><rect x="0.5" y="0.5" width="13" height="15" fill="#fff" stroke="#7a7a8a" stroke-width="1"/>
<g fill="#6a8ac8"><rect x="3" y="3" width="8" height="0.9"/><rect x="3" y="5.5" width="4" height="1.5" fill="#a8bce0"/><rect x="8.5" y="5.5" width="2.5" height="2.5" fill="#a8bce0"/><rect x="3" y="9" width="8" height="0.9"/><rect x="3" y="11" width="8" height="0.9"/><rect x="3" y="13" width="8" height="0.9" fill="#3a5ab0"/></g></svg>
<svg class="a" style="left:469px;top:538px" width="15" height="16" viewBox="0 0 15 16" ><rect x="0.5" y="0.5" width="13" height="15" fill="#fff" stroke="#7a7a8a" stroke-width="1"/>
<g fill="#6a8ac8"><rect x="3" y="3" width="8" height="0.9"/><rect x="3" y="5.5" width="4" height="1.5" fill="#a8bce0"/><rect x="8.5" y="5.5" width="2.5" height="2.5" fill="#a8bce0"/><rect x="3" y="9" width="8" height="0.9"/><rect x="3" y="11" width="8" height="0.9"/><rect x="3" y="13" width="8" height="0.9" fill="#3a5ab0"/></g><rect x="6" y="8" width="9" height="8" fill="#333"/><path d="M7 9 L10 12 L7 15 M10 9 L13 12 L10 15" fill="none" stroke="#22e020" stroke-width="1.6"/></svg>
<svg class="a" style="left:468px;top:563px" width="17" height="17" viewBox="0 0 17 17" ><rect x="0.9" y="0.9" width="13.2" height="12.6" fill="#fff" stroke="#1560b8" stroke-width="1.8"/>
<path d="M3.6 3.2 L4.3 10.6 L7.6 5.2 L8.6 10.6 L12.6 3.2" fill="none" stroke="#1560b8" stroke-width="1.9" stroke-linejoin="miter"/>
<path d="M10.5 11.5 h2.3 v-2.2 l3.3 3.4 l-3.3 3.4 v-2.2 h-2.3z" fill="#48cce8" stroke="#2a9cc0" stroke-width="0.6"/></svg>
<svg class="a" style="left:468px;top:586px" width="16" height="16" viewBox="0 0 16 16" ><path d="M2.5 0.5 H10 L14.5 5 V15.5 H2.5z" fill="#f6f6f6" stroke="#8a8a8a" stroke-width="1"/>
<path d="M10 0.5 V5 H14.5" fill="#e4e4e4" stroke="#8a8a8a" stroke-width="1"/>
<rect x="0.7" y="6.7" width="8.8" height="8.8" fill="#fff" stroke="#1560b8" stroke-width="1.4"/>
<path d="M2.4 8.8 L3 13.8 L5.4 10.4 L6.3 13.8 L8.8 8.8" fill="none" stroke="#1560b8" stroke-width="1.4"/></svg>
<svg class="a" style="left:468px;top:612px" width="15" height="13" viewBox="0 0 15 13" ><path d="M0.5 0.5 H14.5 V9.5 H6 L3.5 12.5 V9.5 H0.5z" fill="#f6f6f6" stroke="#8a8a8a" stroke-width="1"/>
<g fill="#5a8ac0"><rect x="4" y="4.5" width="1.2" height="1.2"/><rect x="7" y="4.5" width="1.2" height="1.2"/><rect x="10" y="4.5" width="1.2" height="1.2"/></g>
<rect x="1" y="7" width="13" height="2" fill="#e4ecf4"/></svg>
<svg class="a" style="left:468px;top:635px" width="16" height="17" viewBox="0 0 16 17" ><path d="M8.00 2.40 L13.54 5.60 L13.54 12.00 L8.00 15.20 L2.46 12.00 L2.46 5.60z" fill="none" stroke="#1a78c8" stroke-width="2.7" stroke-dasharray="5.2 1.2" stroke-dashoffset="-1.5"/>
<g fill="#3aa0e0"><rect x="5.6" y="9" width="1.2" height="3.5"/><rect x="7.6" y="7.8" width="1.2" height="4.7"/><rect x="9.6" y="6.5" width="1.2" height="6"/></g></svg>
<svg class="a" style="left:469px;top:663px" width="13" height="13" viewBox="0 0 13 13" ><g fill="#2f6fd8"><rect x="0" y="0" width="3" height="3"/><rect x="0" y="5" width="3" height="3"/><rect x="0" y="10" width="3" height="3"/></g>
<g fill="#fff" opacity="0.5"><rect x="1.3" y="0" width="0.4" height="13"/><rect x="0" y="1.3" width="3" height="0.4"/><rect x="0" y="6.3" width="3" height="0.4"/><rect x="0" y="11.3" width="3" height="0.4"/></g>
<g fill="#1a1a1a"><rect x="5" y="1" width="8" height="1.3"/><rect x="5" y="6" width="8" height="1.3"/><rect x="5" y="11" width="8" height="1.3"/></g></svg>
<div class="a" style="left:693px;top:632px;width:158px;height:31px;border:4px solid #d39e38;background:#fff"></div>
<svg class="a" style="left:698px;top:639px" width="14" height="14" viewBox="0 0 14 14" ><defs><radialGradient id="sg" cx="0.45" cy="0.4" r="0.7"><stop offset="0" stop-color="#ffffff"/><stop offset="1" stop-color="#9ccbef"/></radialGradient></defs>
<path d="M8.5 8.5 L12.5 12.5" stroke="#b04a08" stroke-width="3" stroke-linecap="round"/>
<path d="M8.5 8.5 L12.5 12.5" stroke="#ffba30" stroke-width="1.6" stroke-linecap="round"/>
<circle cx="5.5" cy="5.5" r="4.6" fill="url(#sg)" stroke="#7a7a9a" stroke-width="1"/></svg>
<div class="cm" style="left:727px;top:638px">Analyze/Compare</div>
</body></html>
